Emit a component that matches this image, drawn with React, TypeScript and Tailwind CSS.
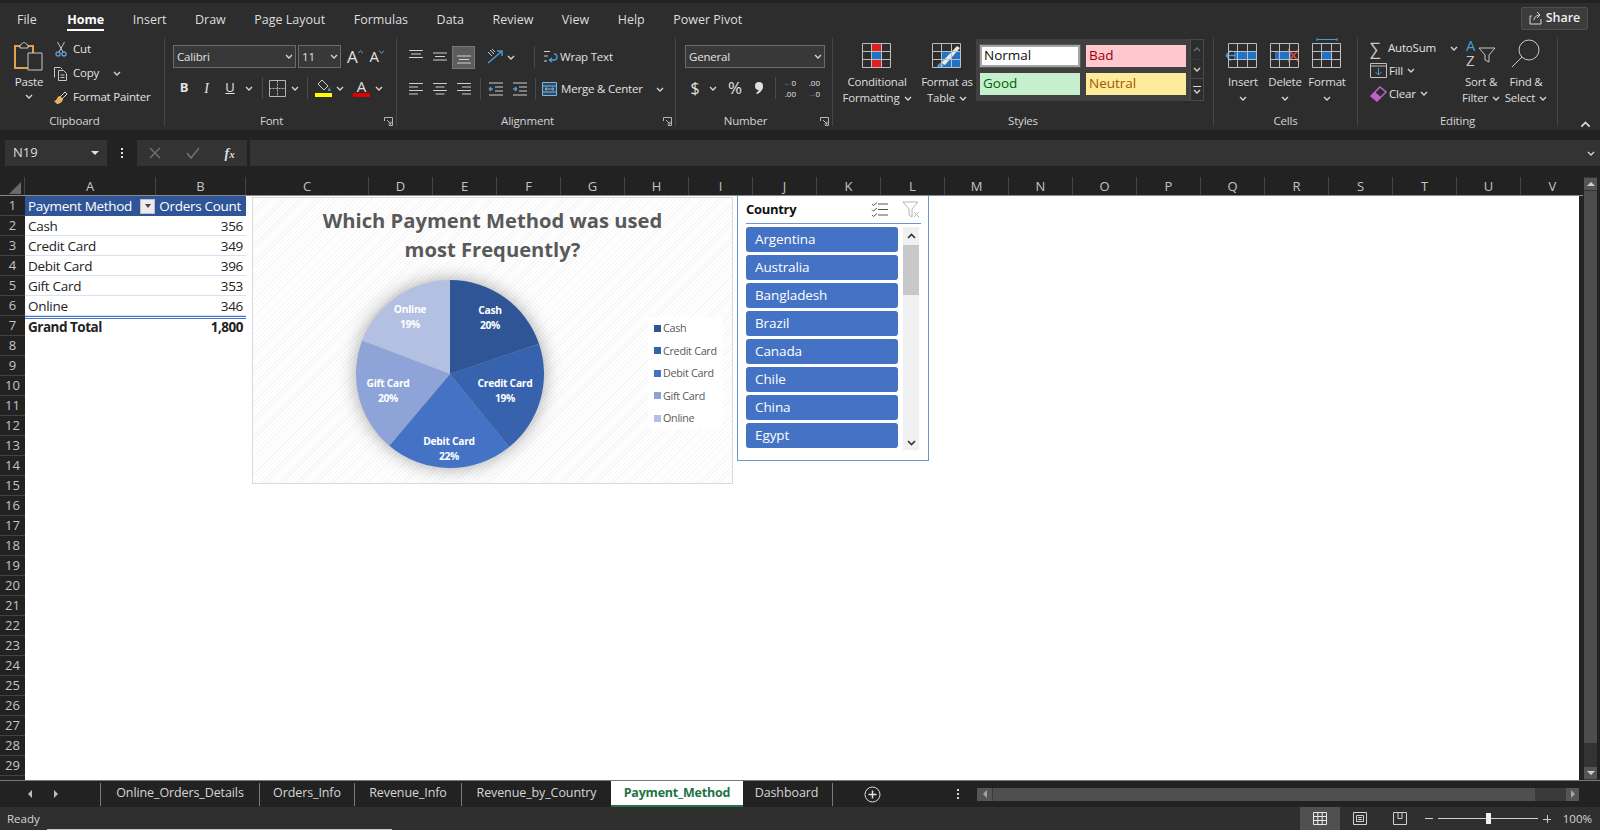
import type { ReactNode } from "react";

const TABS = ["File", "Home", "Insert", "Draw", "Page Layout", "Formulas", "Data", "Review", "View", "Help", "Power Pivot"];
const COLS = [
  { n: "A", w: "w-[131px]" },
  { n: "B", w: "w-[90px]" },
  { n: "C", w: "w-[123px]" },
  ..."DEFGHIJKLMNOPQRSTUV".split("").map((n) => ({ n, w: "w-[64px]" })),
];
const ROWS = [
  ["Cash", "356"],
  ["Credit Card", "349"],
  ["Debit Card", "396"],
  ["Gift Card", "353"],
  ["Online", "346"],
];
const COUNTRIES = ["Argentina", "Australia", "Bangladesh", "Brazil", "Canada", "Chile", "China", "Egypt"];
const PIE = [
  { name: "Cash", v: 356, color: "#2f5597", swatch: "bg-[#2f5597]", pct: "20%", x: 237, y: 116 },
  { name: "Credit Card", v: 349, color: "#3763ae", swatch: "bg-[#3763ae]", pct: "19%", x: 252, y: 189 },
  { name: "Debit Card", v: 396, color: "#4472c4", swatch: "bg-[#4472c4]", pct: "22%", x: 196, y: 247 },
  { name: "Gift Card", v: 353, color: "#8ea3d7", swatch: "bg-[#8ea3d7]", pct: "20%", x: 135, y: 189 },
  { name: "Online", v: 346, color: "#b4c0e1", swatch: "bg-[#b4c0e1]", pct: "19%", x: 157, y: 115 },
];

function Chev({ className = "" }: { className?: string }) {
  return (
    <svg width="8" height="5" viewBox="0 0 8 5" className={`shrink-0 ${className}`}>
      <path d="M1 1l3 3 3-3" fill="none" stroke="#d8d8d8" strokeWidth="1.3" />
    </svg>
  );
}

function Launcher() {
  return (
    <svg width="9" height="9" viewBox="0 0 9 9" className="absolute bottom-0 right-[3px]">
      <path d="M.5 4V.5H8.5V8.5H5M3 3l4 4M7 4.5V7H4.5" fill="none" stroke="#b5b5b5" />
    </svg>
  );
}

function Group({ label, w, labelPad = "", children }: { label: string; w: string; labelPad?: string; children: ReactNode }) {
  return (
    <div className={`relative flex h-[89px] shrink-0 flex-col border-r border-[#444444] ${w}`}>
      <div className="h-[76px] shrink-0">{children}</div>
      <div className={`shrink-0 text-center leading-[16px] text-[#d4d4d4] ${labelPad}`}>{label}</div>
    </div>
  );
}

function IconSlot({ w = "w-[24px]", children }: { w?: string; children: ReactNode }) {
  return <div className={`flex h-[24px] shrink-0 items-center justify-center ${w}`}>{children}</div>;
}

function Lines({ kind }: { kind: "l" | "c" | "r" | "t" | "m" | "b" }) {
  const rows: Record<string, string> = {
    l: "M1 2.5h14M1 6h9M1 9.5h14M1 13h9",
    c: "M1 2.5h14M3.5 6h9M1 9.5h14M3.5 13h9",
    r: "M1 2.5h14M6 6h9M1 9.5h14M6 13h9",
    t: "M1 1.5h14M3 5h10M1 8.5h14",
    m: "M1 4h14M3 7.5h10M1 11h14",
    b: "M1 7h14M3 10.5h10M1 14h14",
  };
  return (
    <svg width="16" height="16" viewBox="0 0 16 16">
      <path d={rows[kind]} stroke="#cfcfcf" fill="none" />
    </svg>
  );
}

function GridIcon({ children }: { children?: ReactNode }) {
  return (
    <svg width="36" height="28" viewBox="0 0 36 28" className="overflow-visible">
      {children}
      <path d="M3.5 2.5h28v24h-28zM3.5 10.5h28M3.5 18.5h28M12.5 2.5v24M22.5 2.5v24" fill="none" stroke="#bdbdbd" />
    </svg>
  );
}

function BigLabel({ a, b }: { a: string; b?: string }) {
  return (
    <div className="mt-[5px] whitespace-nowrap text-center leading-[16px] text-[#dedede]">
      <div>{a}</div>
      <div className="flex h-[16px] items-center justify-center gap-1">
        {b}
        <Chev />
      </div>
    </div>
  );
}

function Ribbon() {
  return (
    <div className="flex h-[93px] bg-[#2d2d2d] text-[11.5px] tracking-[-0.2px] text-[#e2e2e2]">
      <Group label="Clipboard" w="w-[165px]" labelPad="pr-[15px]">
        <div className="flex">
          <div className="flex w-[50px] shrink-0 flex-col items-center pl-[8px] pt-[4px]">
            <svg width="32" height="30" viewBox="0 0 32 30">
              <path d="M2 5h18v22H2z" fill="none" stroke="#e0a14a" strokeWidth="2" />
              <path d="M7 5c0-2 2-2 2-2 0-2 4-2 4 0 0 0 2 0 2 2v2H7z" fill="#2d2d2d" stroke="#c8c8c8" />
              <path d="M15 12h14v17H15z" fill="#2d2d2d" stroke="#c8c8c8" />
            </svg>
            <div className="mt-[3px] leading-[16px]">Paste</div>
            <Chev className="mt-[4px]" />
          </div>
          <div className="flex flex-col pl-[3px]">
            <div className="flex h-[24px] items-center gap-[5px]">
              <div className="flex w-[15px] justify-center">
                <svg width="12" height="16" viewBox="0 0 12 16">
                  <path d="M2.5 1l5.5 10M9.5 1L4 11" stroke="#c8c8c8" fill="none" />
                  <circle cx="3" cy="13" r="2" fill="none" stroke="#5b9bd5" strokeWidth="1.4" />
                  <circle cx="9" cy="13" r="2" fill="none" stroke="#5b9bd5" strokeWidth="1.4" />
                </svg>
              </div>
              Cut
            </div>
            <div className="flex h-[24px] items-center gap-[5px]">
              <svg width="15" height="15" viewBox="0 0 15 15" className="shrink-0">
                <path d="M1.5 11.5v-10h6l2 2M5.5 4.5h5l3 3v7h-8zM7.5 9h4M7.5 11.5h4" fill="none" stroke="#c8c8c8" />
              </svg>
              Copy
              <Chev className="ml-[9px]" />
            </div>
            <div className="flex h-[24px] items-center gap-[5px] whitespace-nowrap">
              <svg width="15" height="15" viewBox="0 0 15 15" className="shrink-0">
                <path d="M7 7l5-5 2 2-5 5" fill="none" stroke="#d8d8d8" />
                <path d="M1 11c3 0 3-5 6-5l3 3c0 3-4 5-6 5z" fill="#e8b25c" />
              </svg>
              Format Painter
            </div>
          </div>
        </div>
      </Group>
      <Group label="Font" w="w-[232px] pl-[8px]" labelPad="pr-[26px]">
        <div className="flex items-center pt-[8px]">
          <div className="flex h-[23px] w-[123px] items-center justify-between border border-[#6b6b6b] bg-[#383838] pl-[3px] pr-[2px]">
            Calibri
            <Chev />
          </div>
          <div className="ml-[2px] flex h-[23px] w-[43px] items-center justify-between border border-[#6b6b6b] bg-[#383838] pl-[3px] pr-[2px]">
            11
            <Chev />
          </div>
          <div className="ml-[6px] text-[17px] leading-none">A</div>
          <svg width="5" height="4" viewBox="0 0 5 4" className="mb-[10px]">
            <path d="M0 3.5l2.5-3 2.5 3" fill="none" stroke="#5b9bd5" />
          </svg>
          <div className="ml-[7px] text-[15px] leading-none">A</div>
          <svg width="5" height="4" viewBox="0 0 5 4" className="mb-[10px]">
            <path d="M0 .5l2.5 3 2.5-3" fill="none" stroke="#5b9bd5" />
          </svg>
        </div>
        <div className="mt-[8px] flex h-[24px] items-center">
          <div className="w-[22px] text-center text-[13px] font-bold">B</div>
          <div className="w-[23px] text-center font-['Liberation_Serif',serif] text-[14px] italic">I</div>
          <div className="w-[24px] text-center text-[13px] underline">U</div>
          <Chev className="ml-[3px] mr-[9px]" />
          <div className="mr-[6px] h-[22px] w-px bg-[#4a4a4a]" />
          <svg width="17" height="17" viewBox="0 0 17 17" className="mr-[5px]">
            <path d="M.5.5h16v16H.5z" fill="none" stroke="#b5b5b5" />
            <path d="M8.5.5v16M.5 8.5h16" fill="none" stroke="#b5b5b5" strokeDasharray="2 1" />
          </svg>
          <Chev className="mr-[8px]" />
          <div className="mr-[7px] h-[22px] w-px bg-[#4a4a4a]" />
          <svg width="17" height="18" viewBox="0 0 17 18" className="mr-[4px]">
            <path d="M7 1l6 6-4 4-6-6z" fill="none" stroke="#d0d0d0" />
            <path d="M14 8l2 4h-3z" fill="#5b9bd5" />
            <path d="M0 14h17v4H0z" fill="#ffff00" />
          </svg>
          <Chev className="mr-[9px]" />
          <div className="relative mr-[5px] h-[18px] w-[17px] text-center text-[15px] leading-[15px]">
            A
            <div className="absolute bottom-0 left-0 h-[4px] w-[17px] bg-[#e00000]" />
          </div>
          <Chev />
        </div>
        <Launcher />
      </Group>
      <Group label="Alignment" w="w-[279px] pl-[7px]" labelPad="pr-[24px]">
        <div className="flex items-center pt-[8px]">
          <IconSlot w="w-[24px]"><Lines kind="t" /></IconSlot>
          <IconSlot w="w-[24px]"><Lines kind="m" /></IconSlot>
          <div className="flex h-[23px] w-[23px] items-center justify-center border border-[#777777] bg-[#5c5c5c]">
            <Lines kind="b" />
          </div>
          <div className="ml-[11px] flex items-center gap-[3px]">
            <svg width="18" height="16" viewBox="0 0 18 16">
              <path d="M2 14L15 3M11 2h5v5" fill="none" stroke="#4a9bd8" strokeWidth="1.4" />
              <path d="M2 3l4 4M4 1l4 4M6 0l3 3" fill="none" stroke="#cfcfcf" />
            </svg>
            <Chev />
          </div>
          <div className="ml-[19px] mr-[8px] h-[22px] w-px bg-[#4a4a4a]" />
          <div className="flex items-center gap-[2px]">
            <svg width="15" height="18" viewBox="0 0 15 18">
              <path d="M1 3.5h6M1 8h4M1 13h3" stroke="#cfcfcf" fill="none" />
              <path d="M6 12h5c4 0 4-6 0-6M6 12l3-2M6 12l3 2" fill="none" stroke="#4a9bd8" strokeWidth="1.3" />
            </svg>
            Wrap Text
          </div>
        </div>
        <div className="mt-[8px] flex h-[24px] items-center">
          <IconSlot w="w-[24px]"><Lines kind="l" /></IconSlot>
          <IconSlot w="w-[24px]"><Lines kind="c" /></IconSlot>
          <IconSlot w="w-[24px]"><Lines kind="r" /></IconSlot>
          <div className="ml-[4px] mr-[2px] h-[22px] w-px bg-[#4a4a4a]" />
          <IconSlot w="w-[24px]">
            <svg width="15" height="14" viewBox="0 0 15 14">
              <path d="M1 1h14M7 5h8M7 9h8M1 13h14" stroke="#cfcfcf" fill="none" />
              <path d="M5 7H1M1 7l2-2M1 7l2 2" stroke="#4a9bd8" fill="none" strokeWidth="1.3" />
            </svg>
          </IconSlot>
          <IconSlot w="w-[24px]">
            <svg width="15" height="14" viewBox="0 0 15 14">
              <path d="M1 1h14M7 5h8M7 9h8M1 13h14" stroke="#cfcfcf" fill="none" />
              <path d="M1 7h4M5 7L3 5M5 7L3 9" stroke="#4a9bd8" fill="none" strokeWidth="1.3" />
            </svg>
          </IconSlot>
          <div className="ml-[4px] mr-[6px] h-[22px] w-px bg-[#4a4a4a]" />
          <div className="flex items-center gap-[4px] whitespace-nowrap">
            <svg width="15" height="14" viewBox="0 0 15 14">
              <path d="M.5.5h14v13H.5zM.5 4h14M.5 10h14" fill="#2d4a63" stroke="#7fb2da" />
              <path d="M3 7h9M3 7l2-1.5M3 7l2 1.5M12 7l-2-1.5M12 7l-2 1.5" fill="none" stroke="#7fb2da" />
            </svg>
            Merge &amp; Center
            <Chev className="ml-[9px]" />
          </div>
        </div>
        <Launcher />
      </Group>
      <Group label="Number" w="w-[157px] pl-[9px]" labelPad="pr-[26px]">
        <div className="pt-[8px]">
          <div className="flex h-[23px] w-[140px] items-center justify-between border border-[#6b6b6b] bg-[#383838] pl-[3px] pr-[2px]">
            General
            <Chev />
          </div>
        </div>
        <div className="mt-[8px] flex h-[24px] items-center">
          <div className="w-[20px] text-center text-[16px]">$</div>
          <Chev className="ml-[4px] mr-[7px]" />
          <div className="w-[22px] text-center text-[17px]">%</div>
          <svg width="10" height="14" viewBox="0 0 10 14" className="ml-[8px]">
            <circle cx="5" cy="5" r="4" fill="#dedede" />
            <path d="M9 5c0 4-3 7-6 8l-1-1c2-1 3-3 3-5z" fill="#dedede" />
          </svg>
          <div className="ml-[11px] mr-[2px] h-[22px] w-px bg-[#4a4a4a]" />
          <div className="mr-[6px] flex w-[18px] flex-col text-[8px] leading-[11px] tracking-normal">
            <span className="text-right">
              <span className="text-[#4a9bd8]">←</span>0
            </span>
            <span className="text-right">.00</span>
          </div>
          <div className="flex w-[18px] flex-col text-[8px] leading-[11px] tracking-normal">
            <span className="text-right">.00</span>
            <span className="text-right">
              <span className="text-[#4a9bd8]">→</span>0
            </span>
          </div>
        </div>
        <Launcher />
      </Group>
      <Group label="Styles" w="w-[381px]">
        <div className="flex">
          <div className="flex w-[88px] shrink-0 flex-col items-center pt-[4px]">
            <GridIcon>
              <path d="M12 3h11v8H12zM12 18h11v8H12z" fill="#e02020" />
              <path d="M12 11h11v7H12z" fill="#1f74c9" />
            </GridIcon>
            <BigLabel a="Conditional" b="Formatting" />
          </div>
          <div className="flex w-[52px] shrink-0 flex-col items-center pt-[4px]">
            <GridIcon>
              <path d="M13 11h18v15H13z" fill="#1f74c9" />
              <path d="M12 22L28 5l3 2-15 17z" fill="#e8e8e8" />
              <path d="M8 27c0-4 2-5 5-5l2 2c0 2-3 3-7 3z" fill="#3f9be0" />
            </GridIcon>
            <BigLabel a="Format as" b="Table" />
          </div>
          <div className="ml-[3px] mt-[2px] flex h-[62px] w-[228px] shrink-0 bg-[#404040]">
            <div className="grid h-full w-[214px] grid-cols-[100px_100px] gap-x-[6px] gap-y-[6px] py-[6px] pl-[4px] text-[13.5px] leading-[21px] tracking-normal">
              <div className="border-2 border-[#a6a6a6] bg-white pl-[2px] leading-[17px] text-[#111111] outline outline-1 outline-[#555555]">Normal</div>
              <div className="bg-[#ffc7ce] pl-[3px] text-[#9c0006]">Bad</div>
              <div className="bg-[#c6efce] pl-[3px] text-[#006100]">Good</div>
              <div className="bg-[#ffeb9c] pl-[3px] text-[#9c5700]">Neutral</div>
            </div>
            <div className="flex w-[14px] flex-col border border-[#4a4a4a] bg-[#2d2d2d]">
              <div className="flex h-[20px] items-center justify-center border-b border-[#4a4a4a] opacity-40">
                <Chev className="rotate-180" />
              </div>
              <div className="flex h-[19px] items-center justify-center border-b border-[#4a4a4a]">
                <Chev />
              </div>
              <div className="flex flex-1 flex-col items-center justify-center gap-[2px]">
                <div className="h-px w-[8px] bg-[#d8d8d8]" />
                <Chev />
              </div>
            </div>
          </div>
        </div>
      </Group>
      <Group label="Cells" w="w-[144px]">
        <div className="flex pl-[9px]">
          <div className="flex w-[40px] flex-col items-center pt-[4px]">
            <GridIcon>
              <path d="M9 11h23v7H9z" fill="#1f74c9" />
              <path d="M11 14.5H1M1 14.5l5-5M1 14.5l5 5" fill="none" stroke="#3f9be0" strokeWidth="1.6" />
            </GridIcon>
            <BigLabel a="Insert" />
          </div>
          <div className="ml-[2px] flex w-[40px] flex-col items-center pt-[4px]">
            <GridIcon>
              <path d="M8 11h16v7H8z" fill="#1f74c9" />
              <path d="M21 8l11 13M32 8L21 21" stroke="#d9453a" strokeWidth="1.6" fill="none" />
            </GridIcon>
            <BigLabel a="Delete" />
          </div>
          <div className="ml-[2px] flex w-[40px] flex-col items-center pt-[4px]">
            <GridIcon>
              <path d="M8 -1.5h20M8 -3v3M28 -3v3" stroke="#3f9be0" fill="none" />
              <path d="M12 11h11v7H12z" fill="#1f74c9" />
            </GridIcon>
            <BigLabel a="Format" />
          </div>
        </div>
      </Group>
      <Group label="Editing" w="w-[200px]">
        <div className="flex pl-[12px]">
          <div className="flex w-[88px] shrink-0 flex-col">
            <div className="flex h-[22px] items-center">
              <div className="w-[19px] text-[17px] leading-none text-[#c8c8c8]">∑</div>
              AutoSum
              <Chev className="ml-[14px]" />
            </div>
            <div className="flex h-[23px] items-center">
              <svg width="17" height="15" viewBox="0 0 17 15" className="mr-[2px]">
                <path d="M.5.5h16v14H.5zM.5 3h16" fill="none" stroke="#c0c0c0" />
                <path d="M8.5 5v7M8.5 12l-3-3M8.5 12l3-3" stroke="#4a9bd8" fill="none" />
              </svg>
              Fill
              <Chev className="ml-[4px]" />
            </div>
            <div className="flex h-[23px] items-center">
              <svg width="17" height="16" viewBox="0 0 17 16" className="mr-[2px]">
                <path d="M1 10l9-9 6 5-9 9z" fill="none" stroke="#c160c8" strokeWidth="1.5" />
                <path d="M1 10l4-4 6 5-4 4z" fill="#c160c8" />
              </svg>
              Clear
              <Chev className="ml-[4px]" />
            </div>
          </div>
          <div className="flex w-[46px] shrink-0 flex-col items-center pt-[2px]">
            <div className="relative h-[30px] w-[30px]">
              <div className="absolute left-0 top-[-2px] text-[15px] leading-[16px] text-[#4a9bd8]">A</div>
              <div className="absolute left-0 top-[13px] text-[15px] leading-[16px] text-[#c8c8c8]">Z</div>
              <svg width="18" height="17" viewBox="0 0 18 17" className="absolute left-[12px] top-[8px]">
                <path d="M1 1h16l-6 7v7l-4 -2V8z" fill="none" stroke="#c8c8c8" />
              </svg>
            </div>
            <BigLabel a="Sort &" b="Filter" />
          </div>
          <div className="ml-[-1px] flex w-[46px] shrink-0 flex-col items-center pt-[2px]">
            <svg width="30" height="30" viewBox="0 0 30 30">
              <circle cx="18" cy="11" r="10" fill="none" stroke="#c8c8c8" />
              <path d="M11 18L1 28" stroke="#c8c8c8" fill="none" />
            </svg>
            <BigLabel a="Find &" b="Select" />
          </div>
        </div>
      </Group>
      <div className="flex flex-1 items-end justify-end pb-[2px] pr-[9px]">
        <Chev className="h-[7px] w-[11px] rotate-180" />
      </div>
    </div>
  );
}

function FormulaBar() {
  return (
    <div className="flex h-[47px] items-start bg-[#222222] pt-[10px] text-[13px] text-[#dcdcdc]">
      <div className="ml-[5px] flex h-[26px] w-[102px] items-center justify-between bg-[#333333] pl-[8px] pr-[8px]">
        N19
        <div className="h-0 w-0 border-x-[4px] border-t-[4px] border-x-transparent border-t-[#e0e0e0]" />
      </div>
      <div className="flex h-[26px] w-[30px] flex-col items-center justify-center gap-[2px]">
        <div className="h-[2px] w-[2px] bg-[#e0e0e0]" />
        <div className="h-[2px] w-[2px] bg-[#e0e0e0]" />
        <div className="h-[2px] w-[2px] bg-[#e0e0e0]" />
      </div>
      <div className="flex h-[26px] w-[110px] items-center justify-around bg-[#333333]">
        <svg width="12" height="12" viewBox="0 0 12 12">
          <path d="M1 1l10 10M11 1L1 11" stroke="#707070" strokeWidth="1.5" />
        </svg>
        <svg width="14" height="12" viewBox="0 0 14 12">
          <path d="M1 6l4 5 8-10" fill="none" stroke="#707070" strokeWidth="1.6" />
        </svg>
        <span className="font-['Liberation_Serif',serif] text-[14px] font-bold italic">
          f<span className="text-[11px]">x</span>
        </span>
      </div>
      <div className="ml-[3px] flex h-[26px] flex-1 items-center justify-end bg-[#333333] pr-[5px]">
        <Chev />
      </div>
    </div>
  );
}

function PieChart() {
  const total = PIE.reduce((s, p) => s + p.v, 0);
  const cx = 197;
  const cy = 176;
  const r = 94;
  let a = -Math.PI / 2;
  const slices = PIE.map((p) => {
    const b = a + (p.v / total) * Math.PI * 2;
    const d = `M${cx} ${cy}L${cx + r * Math.cos(a)} ${cy + r * Math.sin(a)}A${r} ${r} 0 0 1 ${cx + r * Math.cos(b)} ${cy + r * Math.sin(b)}Z`;
    a = b;
    return { ...p, d };
  });
  return (
    <div className="absolute left-[227px] top-[1px] h-[287px] w-[481px] border border-[#d9d9d9] bg-[repeating-linear-gradient(135deg,#f5f5f5_0px,#f5f5f5_1px,#ffffff_1px,#ffffff_3px)]">
      <div className="pt-[8px] text-center text-[20.2px] font-bold leading-[29px] tracking-normal text-[#595959]">
        Which Payment Method was used
        <br />
        most Frequently?
      </div>
      <svg width="400" height="286" viewBox="0 0 400 286" className="absolute left-0 top-0 overflow-visible drop-shadow-[0_0_9px_rgba(0,0,0,0.35)]">
        {slices.map((s) => (
          <path key={s.name} d={s.d} fill={s.color} />
        ))}
      </svg>
      <svg width="400" height="286" viewBox="0 0 400 286" className="absolute left-0 top-0">
        {slices.map((s) => (
          <text key={s.name} x={s.x} y={s.y} textAnchor="middle" fill="#ffffff" fontSize="10.3" fontWeight="700" fontFamily="'Open Sans', sans-serif">
            <tspan x={s.x}>{s.name}</tspan>
            <tspan x={s.x} dy="15">{s.pct}</tspan>
          </text>
        ))}
      </svg>
      <div className="absolute left-[395px] top-[119px] flex h-[112px] w-[75px] flex-col justify-between bg-white px-[6px] py-[3px] text-[10.8px] leading-[16px] text-[#595959]">
        {PIE.map((p) => (
          <div key={p.name} className="flex items-center gap-[2px] whitespace-nowrap">
            <div className={`h-[7px] w-[7px] shrink-0 ${p.swatch}`} />
            {p.name}
          </div>
        ))}
      </div>
    </div>
  );
}

function Slicer() {
  return (
    <div className="absolute left-[712px] top-0 h-[265px] w-[192px] border border-t-0 border-[#6f94cf] bg-white pl-[8px] pr-[7px]">
      <div className="flex h-[28px] items-center justify-between border-b border-[#6f94cf] pr-[1px]">
        <span className="text-[13px] font-bold text-[#111111]">Country</span>
        <div className="flex items-center gap-[14px]">
          <svg width="17" height="15" viewBox="0 0 17 15">
            <path d="M7 2h10M7 7.5h10M7 13h10M1 2l1.5 1.5L6 0.5M1 7.5L2.5 9 6 6M1 13l1.5 1.5L6 11.5" fill="none" stroke="#555555" />
          </svg>
          <svg width="18" height="17" viewBox="0 0 18 17">
            <path d="M1 1h15l-6 7v8l-3-2V8z" fill="none" stroke="#b5b5b5" />
            <path d="M12 11l5 5M17 11l-5 5" stroke="#b5b5b5" fill="none" />
          </svg>
        </div>
      </div>
      <div className="mt-[3px] flex gap-[5px]">
        <div className="flex w-[152px] flex-col gap-[3px]">
          {COUNTRIES.map((c) => (
            <div key={c} className="h-[25px] rounded-[3px] bg-[#4472c4] pl-[9px] text-[13.5px] leading-[25px] tracking-[-0.1px] text-white">
              {c}
            </div>
          ))}
        </div>
        <div className="relative h-[223px] w-[16px] bg-[#f0f0f0]">
          <div className="flex h-[18px] items-center justify-center">
            <svg width="9" height="6" viewBox="0 0 9 6">
              <path d="M1 5l3.5-3.5L8 5" fill="none" stroke="#333333" strokeWidth="1.6" />
            </svg>
          </div>
          <div className="h-[50px] bg-[#c8c8c8]" />
          <div className="absolute bottom-[4px] left-0 flex w-full justify-center">
            <svg width="9" height="6" viewBox="0 0 9 6">
              <path d="M1 1l3.5 3.5L8 1" fill="none" stroke="#333333" strokeWidth="1.6" />
            </svg>
          </div>
        </div>
      </div>
    </div>
  );
}

function Sheet() {
  const rowNums = Array.from({ length: 29 }, (_, i) => i + 1);
  return (
    <div className="flex h-[603px] bg-[#222222]">
      <div className="flex w-[1583px] shrink-0 flex-col overflow-hidden">
        <div className="flex h-[18px] shrink-0">
          <div className="flex w-[25px] shrink-0 items-end justify-end border-r border-[#444444] pb-[1px] pr-[3px]">
            <div className="h-0 w-0 border-b-[12px] border-l-[12px] border-b-[#6a6a6a] border-l-transparent" />
          </div>
          {COLS.map((c) => (
            <div key={c.n} className={`shrink-0 border-r border-[#444444] text-center text-[13px] leading-[18px] text-[#c4c4c4] ${c.w}`}>
              {c.n}
            </div>
          ))}
        </div>
        <div className="flex h-[585px] border-t border-[#8a8a8a]">
          <div className="w-[25px] shrink-0">
            {rowNums.map((n) => (
              <div key={n} className="h-[20px] border-b border-[#444444] text-center text-[13px] leading-[19px] text-[#c4c4c4]">
                {n}
              </div>
            ))}
          </div>
          <div className="relative mr-[4px] w-[1554px] shrink-0 bg-white text-[13.5px] tracking-[-0.3px] text-[#222222]">
            <div className="flex h-[20px] w-[221px] items-center whitespace-nowrap bg-[#2f5597] text-white">
              <div className="flex w-[131px] items-center justify-between pl-[3px] pr-px">
                Payment Method
                <div className="flex h-[15px] w-[15px] items-center justify-center border border-[#bfbfbf] bg-[#ececec]">
                  <div className="h-0 w-0 border-x-[3px] border-t-[4px] border-x-transparent border-t-[#444444]" />
                </div>
              </div>
              <div className="w-[90px] pr-[5px] text-right">Orders Count</div>
            </div>
            {ROWS.map(([name, count]) => (
              <div key={name} className="flex h-[20px] w-[221px] items-center justify-between border-b border-[#d9e1f2] px-[3px] pt-[2px] last:border-b-0">
                <span>{name}</span>
                <span>{count}</span>
              </div>
            ))}
            <div className="flex h-[20px] w-[221px] items-center justify-between border-t-[3px] border-double border-[#4472c4] px-[3px] pb-[1px] font-bold tracking-[-0.5px]">
              <span>Grand Total</span>
              <span>1,800</span>
            </div>
            <PieChart />
            <Slicer />
          </div>
        </div>
      </div>
      <div className="ml-px flex w-[13px] shrink-0 flex-col bg-[#333333] pb-[1px] pt-px">
        <div className="flex h-[12px] items-center justify-center bg-[#555555]">
          <div className="h-0 w-0 border-x-[4px] border-b-[4px] border-x-transparent border-b-[#d0d0d0]" />
        </div>
        <div className="mt-px h-[552px] bg-[#4d4d4d]" />
        <div className="mt-auto flex h-[12px] items-center justify-center bg-[#555555]">
          <div className="h-0 w-0 border-x-[4px] border-t-[4px] border-x-transparent border-t-[#d0d0d0]" />
        </div>
      </div>
    </div>
  );
}

function SheetTabs() {
  const sep = "h-[23px] w-px bg-[#7a7a7a]";
  return (
    <div className="flex h-[27px] items-center border-t border-[#7a7a7a] bg-[#222222] text-[12.5px] tracking-[-0.1px] text-[#d6d6d6]">
      <div className="flex w-[100px] shrink-0 items-center gap-[22px] pl-[28px]">
        <div className="h-0 w-0 border-y-[4px] border-r-[4px] border-y-transparent border-r-[#bdbdbd]" />
        <div className="h-0 w-0 border-y-[4px] border-l-[4px] border-y-transparent border-l-[#bdbdbd]" />
      </div>
      <div className={sep} />
      <div className="w-[158px] pb-[2px] text-center">Online_Orders_Details</div>
      <div className={sep} />
      <div className="w-[94px] pb-[2px] text-center">Orders_Info</div>
      <div className={sep} />
      <div className="w-[106px] pb-[2px] text-center">Revenue_Info</div>
      <div className={sep} />
      <div className="w-[149px] pb-[2px] text-center">Revenue_by_Country</div>
      <div className="flex h-[26px] w-[132px] items-center justify-center self-start border-b-2 border-[#217346] bg-white font-bold tracking-[-0.2px] text-[#217346]">
        Payment_Method
      </div>
      <div className="w-[89px] pb-[2px] pr-[2px] text-center">Dashboard</div>
      <div className={sep} />
      <div className="flex w-[79px] justify-center">
        <svg width="17" height="17" viewBox="0 0 17 17">
          <circle cx="8.5" cy="8.5" r="7.5" fill="none" stroke="#e0e0e0" />
          <path d="M8.5 4.5v8M4.5 8.5h8" stroke="#e0e0e0" strokeWidth="1.5" />
        </svg>
      </div>
      <div className="flex w-[64px] flex-col items-center gap-[2px] pl-[27px]">
        <div className="h-[2px] w-[2px] bg-[#d6d6d6]" />
        <div className="h-[2px] w-[2px] bg-[#d6d6d6]" />
        <div className="h-[2px] w-[2px] bg-[#d6d6d6]" />
      </div>
      <div className="ml-[1px] flex h-[13px] w-[602px] bg-[#3a3a3a]">
        <div className="flex w-[15px] items-center justify-center bg-[#555555]">
          <div className="h-0 w-0 border-y-[4px] border-r-[4px] border-y-transparent border-r-[#a5a5a5]" />
        </div>
        <div className="ml-px w-[542px] bg-[#4f4f4f]" />
        <div className="ml-auto flex w-[13px] items-center justify-center bg-[#555555]">
          <div className="h-0 w-0 border-y-[4px] border-l-[4px] border-y-transparent border-l-[#a5a5a5]" />
        </div>
      </div>
    </div>
  );
}

function StatusBar() {
  return (
    <div className="relative flex h-[23px] items-center bg-[#2f2f2f] pl-[7px] text-[11.5px] text-[#d6d6d6]">
      Ready
      <div className="absolute bottom-0 left-[47px] h-px w-[345px] bg-[#c8c8c8]" />
      <div className="ml-auto flex h-full items-center">
        <div className="flex h-full w-[40px] items-center justify-center bg-[#505050]">
          <svg width="14" height="13" viewBox="0 0 14 13">
            <path d="M.5.5h13v12H.5zM.5 4.5h13M.5 8.5h13M4.8.5v12M9.2.5v12" fill="none" stroke="#e8e8e8" />
          </svg>
        </div>
        <div className="flex h-full w-[40px] items-center justify-center">
          <svg width="14" height="13" viewBox="0 0 14 13">
            <path d="M.5.5h13v12H.5zM3.5 3.5h7v6h-7zM5 5.5h4M5 7.5h4" fill="none" stroke="#d0d0d0" />
          </svg>
        </div>
        <div className="flex h-full w-[40px] items-center justify-center">
          <svg width="14" height="13" viewBox="0 0 14 13">
            <path d="M.5.5h13v12H.5zM5 .5v6h4M9 .5v6" fill="none" stroke="#d0d0d0" />
          </svg>
        </div>
        <div className="ml-[5px] h-px w-[8px] bg-[#d0d0d0]" />
        <div className="relative mx-[5px] h-px w-[100px] bg-[#d0d0d0]">
          <div className="absolute left-[48px] top-[-5px] h-[11px] w-[5px] bg-[#f0f0f0]" />
        </div>
        <div className="relative h-[8px] w-[8px]">
          <div className="absolute left-0 top-[4px] h-px w-[8px] bg-[#d0d0d0]" />
          <div className="absolute left-[4px] top-0 h-[8px] w-px bg-[#d0d0d0]" />
        </div>
        <div className="w-[49px] pr-[8px] text-right">100%</div>
      </div>
    </div>
  );
}

export default function App() {
  return (
    <div className="h-[830px] w-[1600px] overflow-hidden bg-[#222222] pt-[3px] font-['Open_Sans',sans-serif]">
      <div className="relative flex h-[34px] items-center gap-[28.5px] bg-[#2d2d2d] pl-[17px] text-[12.5px] text-[#dedede]">
        {TABS.map((t) =>
          t === "Home" ? (
            <div key={t} className="relative ml-[2px] font-bold text-white">
              {t}
              <div className="absolute -bottom-[2px] left-0 h-[2px] w-full bg-white" />
            </div>
          ) : (
            <div key={t}>{t}</div>
          ),
        )}
        <div className="absolute right-[12px] top-[4px] flex h-[23px] w-[67px] items-center justify-center gap-[4px] rounded-[2px] border border-[#4f4f4f] bg-[#3c3c3c] font-semibold text-[#eeeeee]">
          <svg width="13" height="13" viewBox="0 0 13 13">
            <path d="M3 4H1v8h11V7M5 8c0-3 3-5 6-5M8 0l3 3-3 3" fill="none" stroke="#d8d8d8" />
          </svg>
          Share
        </div>
      </div>
      <Ribbon />
      <FormulaBar />
      <Sheet />
      <SheetTabs />
      <StatusBar />
    </div>
  );
}
